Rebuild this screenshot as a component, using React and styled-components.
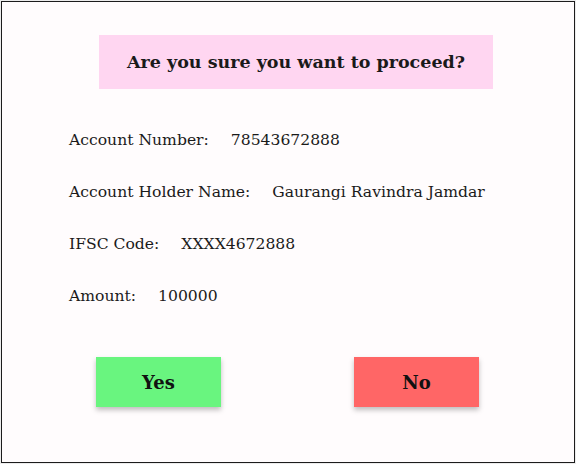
import React from 'react'
import styled, { createGlobalStyle } from 'styled-components'

const GlobalStyle = createGlobalStyle`
    html, body {
        margin: 0;
        padding: 0;
        background: #ececec;
    }
    body {
        font-family: 'DejaVu Serif', 'Liberation Serif', serif;
    }
`

const details = [
    { label: 'Account Number:', value: '78543672888' },
    { label: 'Account Holder Name:', value: 'Gaurangi Ravindra Jamdar' },
    { label: 'IFSC Code:', value: 'XXXX4672888' },
    { label: 'Amount:', value: '100000' },
]

const App = () => {
    return (
        <>
            <GlobalStyle />
            <Frame>
                <Title>Are you sure you want to proceed?</Title>
                <Details>
                    {details.map((d) => (
                        <Row key={d.label}>
                            <span>{d.label}</span>
                            <span>{d.value}</span>
                        </Row>
                    ))}
                </Details>
                <Actions>
                    <Button $bg="#69f57f">Yes</Button>
                    <Button $bg="#ff6666">No</Button>
                </Actions>
            </Frame>
        </>
    )
}

export default App

const Frame = styled.div`
    box-sizing: border-box;
    width: 574px;
    height: 462px;
    margin: 1px;
    border: 1px solid #1c1c1c;
    background: #fffcfd;
    display: flex;
    flex-direction: column;
    padding-top: 33px;
`

const Title = styled.h1`
    box-sizing: border-box;
    width: 394px;
    height: 54px;
    margin: 0 0 0 97px;
    background: #ffd6f1;
    display: flex;
    align-items: center;
    justify-content: center;
    font-size: 17.5px;
    font-weight: 700;
    color: #1a1a1a;
`

const Details = styled.div`
    padding: 41px 0 0 67px;
    display: flex;
    flex-direction: column;
    gap: 32px;
`

const Row = styled.div`
    display: flex;
    gap: 22px;
    font-size: 15.6px;
    line-height: 20px;
    color: #1a1a1a;
`

const Actions = styled.div`
    display: flex;
    justify-content: space-between;
    padding: 51px 95px 0 94px;
`

const Button = styled.button`
    width: 125px;
    height: 50px;
    border: none;
    background: ${(p) => p.$bg};
    box-shadow: 0 3px 5px rgba(0, 0, 0, 0.25);
    font-family: 'DejaVu Serif', serif;
    font-size: 18px;
    font-weight: 700;
    color: #111;
    cursor: pointer;
`
